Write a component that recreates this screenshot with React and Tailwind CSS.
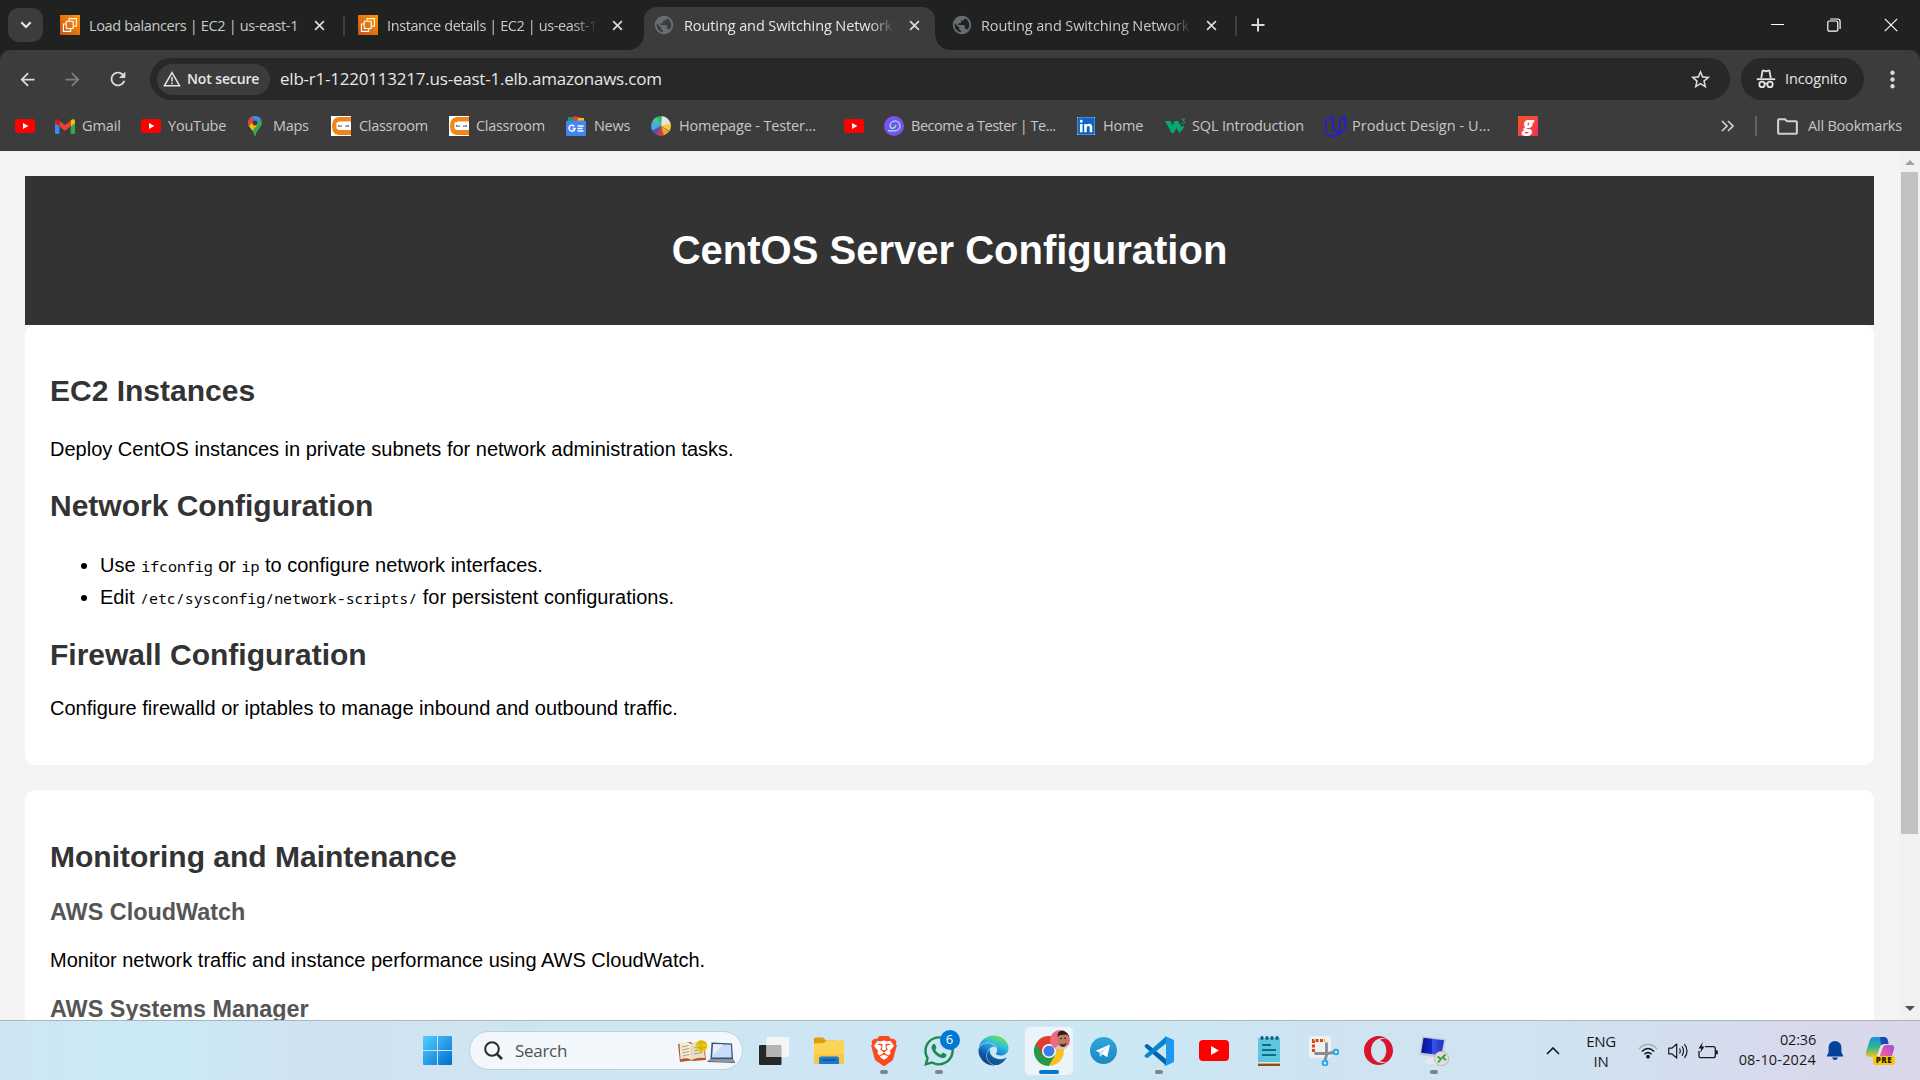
import { SiBrave, SiOpera, SiUdacity } from "react-icons/si";
import { FaWhatsapp, FaEdge, FaLinkedin } from "react-icons/fa";
import {
  MdArrowBack,
  MdArrowForward,
  MdRefresh,
  MdStarOutline,
  MdPublic,
  MdMoreVert,
  MdOutlineFolder,
} from "react-icons/md";

/* ---------- tab strip ---------- */

function Ec2Icon() {
  return (
    <svg viewBox="0 0 20 20" className="size-5 shrink-0">
      <defs>
        <linearGradient id="ec2" x1="0" y1="1" x2="1" y2="0">
          <stop offset="0" stopColor="#c8511b" />
          <stop offset="1" stopColor="#ff9900" />
        </linearGradient>
      </defs>
      <rect width="20" height="20" fill="url(#ec2)" />
      <g fill="none" stroke="#fff" strokeWidth="1.1">
        <rect x="6.2" y="6.2" width="7" height="7.3" rx=".6" />
        <path d="M9 6V3.6h7.4v7.6h-3M6 9H3.4v7.4h7.3v-2.7" />
      </g>
    </svg>
  );
}

function CloseX({ className }) {
  return (
    <svg viewBox="0 0 12 12" className={className} fill="none" stroke="currentColor" strokeWidth="1.9">
      <path d="M1.2 1.2l9.6 9.6M10.8 1.2L1.2 10.8" />
    </svg>
  );
}

function Tab({ icon, title, className, textClass, fade }) {
  return (
    <div className={`flex items-center ${className}`}>
      {icon}
      <span
        className={`mt-[2px] w-[211px] overflow-hidden whitespace-nowrap text-[14.5px] ${textClass} ${
          fade ? "[mask-image:linear-gradient(to_right,#000_88%,transparent)]" : ""
        }`}
      >
        {title}
      </span>
      <CloseX className="ml-[14px] size-[11px] shrink-0 text-[#d8d8d8]" />
    </div>
  );
}

function TabStrip() {
  return (
    <div className="flex h-[50px] bg-[#202221]">
      <div className="ml-2 mt-2 flex h-[34px] w-[35px] items-center justify-center rounded-[11px] bg-[#3c3c3c]">
        <svg viewBox="0 0 12 8" className="h-2 w-3" fill="none" stroke="#e6e6e6" strokeWidth="2.2">
          <path d="M1.3 1.3L6 6l4.7-4.7" />
        </svg>
      </div>
      <Tab
        className="ml-[17px] w-[283px]"
        icon={<Ec2Icon />}
        title="Load balancers | EC2 | us-east-1"
        textClass="ml-[9px] text-[#c9c9c9] tracking-[-0.36px]"
      />
      <div className="mt-[16px] h-5 w-0.5 rounded bg-[#3f4140]" />
      <Tab
        className="ml-[13px] w-[271px]"
        icon={<Ec2Icon />}
        title="Instance details | EC2 | us-east-1"
        textClass="ml-[9px] text-[#c9c9c9] tracking-[-0.4px]"
        fade
      />
      <div className="flex self-stretch">
        <div className="mt-auto size-[15px] bg-[radial-gradient(circle_at_0_0,transparent_14.5px,#3c3c3c_15px)]" />
        <Tab
          className="mt-[7px] w-[291px] rounded-t-[13px] bg-[#3c3c3c] pb-[7px] pl-[9px]"
          icon={<MdPublic className="size-[22px] shrink-0 text-[#696d73]" />}
          title="Routing and Switching Network"
          textClass="ml-[9px] text-[#e6e6e6] tracking-[-0.1px]"
          fade
        />
        <div className="mt-auto size-[15px] bg-[radial-gradient(circle_at_100%_0,transparent_14.5px,#3c3c3c_15px)]" />
      </div>
      <Tab
        className="ml-[1px] w-[284px]"
        icon={<MdPublic className="size-[22px] shrink-0 text-[#696d73]" />}
        title="Routing and Switching Network"
        textClass="ml-[8px] text-[#c9c9c9] tracking-[-0.1px]"
        fade
      />
      <div className="mt-[16px] h-5 w-0.5 rounded bg-[#3f4140]" />
      <svg viewBox="0 0 14 14" className="ml-[14px] mt-[18px] size-[14px]" stroke="#d8d8d8" strokeWidth="2">
        <path d="M7 .5v13M.5 7h13" />
      </svg>
      <div className="ml-auto mr-[22px] mt-[17px] flex h-[15px] items-center text-white">
        <div className="h-[1.5px] w-[13px] bg-white" />
        <svg viewBox="0 0 14 14" className="ml-[43px] size-[14px]" fill="none" stroke="currentColor" strokeWidth="1.2">
          <rect x=".8" y="3" width="10" height="10.2" rx="1.5" />
          <path d="M3.2 1h7.3a2.6 2.6 0 0 1 2.6 2.6v7.4" />
        </svg>
        <svg viewBox="0 0 14 14" className="ml-[43px] size-[14px]" stroke="currentColor" strokeWidth="1.2">
          <path d="M.8.8l12.4 12.4M13.2.8L.8 13.2" />
        </svg>
      </div>
    </div>
  );
}

/* ---------- toolbar ---------- */

function IncognitoIcon() {
  return (
    <svg viewBox="0 0 20 20" className="size-[20px]" fill="none" stroke="#e3e3e3" strokeWidth="1.8">
      <path d="M5.2 9.2L6.6 1.6h1.2l2.2.8 2.2-.8h1.2l1.4 7.6" strokeLinejoin="round" />
      <path d="M.8 10.2h18.4" />
      <circle cx="6" cy="15.4" r="2.7" />
      <circle cx="14" cy="15.4" r="2.7" />
      <path d="M8.6 14.8q1.4-.8 2.8 0" />
    </svg>
  );
}

function Toolbar() {
  return (
    <div className="bg-[#202221]">
      <div className="flex h-[58px] rounded-t-[11px] bg-[#3c3c3c] pt-2">
        <div className="flex h-[42px] items-center text-[21px] text-[#dcdcdc]">
          <MdArrowBack className="ml-[17px]" />
          <MdArrowForward className="ml-[24px] text-[#7f7f7f]" />
          <MdRefresh className="ml-[24px] text-[22px]" />
        </div>
        <div className="ml-[21px] flex h-[42px] w-[1580px] items-center rounded-full bg-[#282828] pl-[7px]">
          <div className="flex h-[31px] w-[113px] items-center rounded-full bg-[#3c3c3c] pl-[6px]">
            <svg viewBox="0 0 18 16" className="h-4 w-[18px]" fill="none" stroke="#e3e3e3" strokeWidth="1.5">
              <path d="M9 1.6L16.6 14.8H1.4z" />
              <path d="M9 6v4.4M9 11.6v1.6" />
            </svg>
            <span className="mb-[2px] ml-[6px] whitespace-nowrap text-[14px] font-semibold tracking-[-0.12px] text-[#e6e6e6]">
              Not secure
            </span>
          </div>
          <span className="ml-[10px] text-[17px] tracking-[-0.22px] text-[#e6e6e6]">
            elb-r1-1220113217.us-east-1.elb.amazonaws.com
          </span>
          <MdStarOutline className="ml-auto mr-[18px] size-[23px] text-[#dcdcdc]" />
        </div>
        <div className="ml-[11px] flex h-[42px] w-[123px] items-center rounded-full bg-[#282828] pl-[15px]">
          <IncognitoIcon />
          <span className="ml-[9px] text-[14.5px] tracking-[-0.1px] text-[#e6e6e6]">Incognito</span>
        </div>
        <div className="ml-[15px] flex h-[42px] items-center">
          <MdMoreVert className="size-[27px] text-[#dcdcdc]" />
        </div>
      </div>
    </div>
  );
}

/* ---------- bookmarks ---------- */

function YouTube({ className }) {
  return (
    <svg viewBox="0 0 30 21" className={className}>
      <rect width="30" height="21" rx="4" fill="#f00" />
      <path d="M12 6l8 4.5-8 4.5z" fill="#fff" />
    </svg>
  );
}

function Gmail() {
  return (
    <svg viewBox="0 0 20 15" className="h-[15px] w-5">
      <path d="M0 2.2V14a1 1 0 0 0 1 1h3.4V6z" fill="#4285f4" />
      <path d="M20 2.2V14a1 1 0 0 1-1 1h-3.4V6z" fill="#34a853" />
      <path d="M15.6 1.8V7.6L20 4.2V2a2 2 0 0 0-3.2-1.4z" fill="#fbbc04" />
      <path d="M4.4 1.8L10 6l5.6-4.2V7.6L10 11.8 4.4 7.6z" fill="#ea4335" />
      <path d="M0 2v2.2l4.4 3.4V1.8L3.2.6A2 2 0 0 0 0 2z" fill="#c5221f" />
    </svg>
  );
}

function Maps() {
  return (
    <svg viewBox="0 0 14 20" className="h-5 w-[14px]">
      <defs>
        <clipPath id="pin">
          <path d="M7 0a7 7 0 0 1 7 7c0 4-5 6-6.2 12.2-.2 1-1.400 1-1.600 0C5 13 0 11 0 7a7 7 0 0 1 7-7z" />
        </clipPath>
      </defs>
      <g clipPath="url(#pin)">
        <rect width="14" height="20" fill="#34a853" />
        <path d="M-1 11.5L9 0H-1z" fill="#1a73e8" />
        <path d="M-1 0h4l4 5-8 6z" fill="#ea4335" />
        <path d="M2.500 0H14v4L8 6z" fill="#4285f4" />
        <path d="M0 11L6 5l4 3-6 7z" fill="#fbbc04" />
      </g>
      <circle cx="7" cy="7" r="2.5" fill="#3c3c3c" />
    </svg>
  );
}

function Classroom() {
  return (
    <svg viewBox="0 0 20 20" className="size-5">
      <rect width="20" height="20" fill="#fff" />
      <path d="M20 1H8Q1 1.500 1 10t7 9h12v-5H9q-2.500 0-2.800-2.500V8Q6.500 5.500 9 5.500h11z" fill="#f0861a" />
      <rect x="5.500" y="6" width="14.500" height="7.500" rx="1.500" fill="#fff" />
      <path d="M7 9q2 1.400 4 .4v1.200H7zM14 9.400q2 1 4-.4v1.600h-4z" fill="#333" />
    </svg>
  );
}

function News() {
  return (
    <svg viewBox="0 0 20 20" className="size-5">
      <path d="M2 1h8v8H2z" fill="#0f9d58" />
      <path d="M8 0l9 2-2 7H6z" fill="#ea4335" />
      <path d="M12.500 2H18v6h-8z" fill="#fbbc04" />
      <rect y="4.5" width="20" height="15.5" rx="1.5" fill="#4285f4" />
      <path d="M8.4 10.3a3 3 0 1 0 .6 2.300H6.5M11.500 10h6M11.500 12.500h5M11.500 15h6" stroke="#fff" strokeWidth="1.5" fill="none" />
    </svg>
  );
}

function TesterWheel() {
  return (
    <svg viewBox="0 0 20 20" className="size-5">
      <defs>
        <clipPath id="wheel">
          <circle cx="10" cy="10" r="10" />
        </clipPath>
      </defs>
      <g clipPath="url(#wheel)">
        <path d="M10 10L0 0h12z" fill="#2fb58a" />
        <path d="M10 10L11 0h9v9z" fill="#e3e6e4" />
        <path d="M10 10l10-3v9z" fill="#f5c93a" />
        <path d="M10 10l9 6-7 4z" fill="#f0a03c" />
        <path d="M10 10l3 10H4z" fill="#c0483a" />
        <path d="M10 10L5 20H0v-6z" fill="#5a4fb0" />
        <path d="M10 10L0 15V2z" fill="#4ba7dd" />
        <path d="M10 10L1 4l4-4z" fill="#45c98e" />
      </g>
    </svg>
  );
}

function TesterBadge() {
  return (
    <svg viewBox="0 0 20 20" className="size-5">
      <circle cx="10" cy="10" r="10" fill="#7a52f4" />
      <path d="M4 14.800h7.500a4.900 4.900 0 1 0-5.400-5q.4 3 3 2.400 2-.6 3-3.200" fill="none" stroke="#8ce0d8" strokeWidth="1.5" />
    </svg>
  );
}

function W3() {
  return (
    <svg viewBox="0 0 21 16" className="h-4 w-[21px]">
      <path d="M0 3h5.500l2 4.500L9.500 3H13l3.500 6 1.500-1.500 1 2L14.500 15 11.300 10 8.800 15H6.500z" fill="#04aa6d" />
      <path d="M16.500 1h3l-1.500 2q2 .2 1.500 2-.8 1.600-3 .6" fill="none" stroke="#04aa6d" strokeWidth="1" />
    </svg>
  );
}

function GTile() {
  return (
    <div className="flex size-5 items-center justify-center bg-gradient-to-br from-[#f4581c] to-[#ee2a5c] pb-[4px] font-['Open_Sans'] text-[19px] font-extrabold italic leading-none text-white">
      g
    </div>
  );
}

const bookmarks = [
  { w: "w-[40px]", icon: <YouTube className="h-[14px] w-5" /> },
  { w: "w-[86px]", icon: <Gmail />, label: "Gmail", text: "ml-[7px] tracking-[-0.1px]" },
  { w: "w-[107px]", icon: <YouTube className="h-[14px] w-5" />, label: "YouTube", text: "ml-[7px] tracking-[-0.2px]" },
  { w: "w-[83px]", icon: <Maps />, label: "Maps", text: "ml-[11px]" },
  { w: "w-[118px]", icon: <Classroom />, label: "Classroom" },
  { w: "w-[117px]", icon: <Classroom />, label: "Classroom", text: "ml-[7px]" },
  { w: "w-[85px]", icon: <News />, label: "News" },
  { w: "w-[193px]", icon: <TesterWheel />, label: "Homepage - Tester...", text: "ml-[8px] tracking-[-0.15px]" },
  { w: "w-[40px]", icon: <YouTube className="h-[14px] w-5" /> },
  { w: "w-[193px]", icon: <TesterBadge />, label: "Become a Tester | Te...", text: "ml-[7px] tracking-[-0.48px]" },
  {
    w: "w-[88px]",
    icon: (
      <span className="flex size-[18px] items-center justify-center bg-white">
        <FaLinkedin className="size-[20px] shrink-0 text-[#0a66c2]" />
      </span>
    ),
    label: "Home",
    text: "ml-[8px] tracking-[-0.2px]",
  },
  { w: "w-[160px]", icon: <W3 />, label: "SQL Introduction", text: "ml-[6px] tracking-[-0.15px]" },
  {
    w: "w-[193px]",
    icon: <SiUdacity className="size-[21px] text-[#2015ff]" />,
    label: "Product Design - U...",
    text: "ml-[6px] tracking-[0.05px]",
  },
  { w: "w-[40px]", icon: <GTile /> },
];

function Bookmarks() {
  return (
    <div className="flex h-[43px] bg-[#3c3c3c] pb-[7px] pl-[15px] text-[14.5px] tracking-[-0.3px] text-[#c7c7c7]">
      {bookmarks.map((b, i) => (
        <div key={i} className={`flex shrink-0 items-center whitespace-nowrap ${b.w}`}>
          <span className="shrink-0">{b.icon}</span>
          {b.label && <span className={b.text || "ml-[8px]"}>{b.label}</span>}
        </div>
      ))}
      <div className="ml-auto flex items-center pr-[18px]">
        <svg viewBox="0 0 13 12" className="h-3 w-[13px]" fill="none" stroke="#d0d0d0" strokeWidth="1.7">
          <path d="M1 1l5 5-5 5M7 1l5 5-5 5" />
        </svg>
        <div className="ml-[21px] h-5 w-0.5 rounded bg-[#636363]" />
        <MdOutlineFolder className="ml-[18px] size-[25px] text-[#d0d0d0]" />
        <span className="ml-[8px] tracking-[-0.2px]">All Bookmarks</span>
      </div>
    </div>
  );
}

/* ---------- web page ---------- */

function H2({ className, children }) {
  return <h2 className={`text-[30px] font-bold leading-[48px] text-[#333] ${className || ""}`}>{children}</h2>;
}

function H3({ className, children }) {
  return <h3 className={`text-[23.4px] font-bold leading-[37px] text-[#555] ${className || ""}`}>{children}</h3>;
}

function Code({ children }) {
  return <code className="font-['Noto_Sans_Mono','DejaVu_Sans_Mono',monospace] text-[15px] tracking-[-0.06px]">{children}</code>;
}

function Page() {
  return (
    <div className="flex h-[869px] overflow-hidden bg-[#f4f4f4]">
      <main className="ml-[25px] mr-[25px] mt-[25px] flex-1 font-['Liberation_Sans',Arial,sans-serif] text-[20px] leading-[32px] text-black">
        <header className="h-[149px] bg-[#333] pt-[42px] text-center">
          <h1 className="text-[40px] font-bold leading-[64px] text-white">CentOS Server Configuration</h1>
        </header>
        <section className="h-[440px] rounded-[10px] bg-white px-[25px] pt-[42px]">
          <H2>EC2 Instances</H2>
          <p className="mt-[18px]">Deploy CentOS instances in private subnets for network administration tasks.</p>
          <H2 className="mt-[17px]">Network Configuration</H2>
          <ul className="mt-[19px] list-disc pl-[50px]">
            <li className="h-8">
              Use <Code>ifconfig</Code> or <Code>ip</Code> to configure network interfaces.
            </li>
            <li className="h-8">
              Edit <Code>/etc/sysconfig/network-scripts/</Code> for persistent configurations.
            </li>
          </ul>
          <H2 className="mt-[18px]">Firewall Configuration</H2>
          <p className="mt-[13px]">Configure firewalld or iptables to manage inbound and outbound traffic.</p>
        </section>
        <section className="mt-[25px] h-[440px] rounded-[10px] bg-white px-[25px] pt-[43px]">
          <H2>Monitoring and Maintenance</H2>
          <H3 className="mt-[13px]">AWS CloudWatch</H3>
          <p className="mt-[13px]">Monitor network traffic and instance performance using AWS CloudWatch.</p>
          <H3 className="mt-[15px]">AWS Systems Manager</H3>
        </section>
      </main>
      <div className="flex w-[21px] flex-col items-center bg-[#f1f1f1]">
        <svg viewBox="0 0 10 5" className="mt-[9px] h-[5px] w-[10px] shrink-0">
          <path d="M5 0l5 5H0z" fill="#a3a3a3" />
        </svg>
        <div className="mt-[7px] h-[662px] w-[17px] shrink-0 bg-[#c1c1c1]" />
        <svg viewBox="0 0 10 5" className="mb-[9px] mt-auto h-[5px] w-[10px] shrink-0">
          <path d="M5 5l5-5H0z" fill="#505050" />
        </svg>
      </div>
    </div>
  );
}

/* ---------- taskbar ---------- */

function StartIcon() {
  return (
    <svg viewBox="0 0 29 29" className="size-[29px]">
      <defs>
        <linearGradient id="win" x1="0" y1="0" x2="29" y2="29" gradientUnits="userSpaceOnUse">
          <stop offset="0" stopColor="#52d1ff" />
          <stop offset="1" stopColor="#006ccf" />
        </linearGradient>
      </defs>
      <path
        d="M1 0h13v14H0V1a1 1 0 0 1 1-1zM15 0h13a1 1 0 0 1 1 1v13H15zM0 15h14v14H1a1 1 0 0 1-1-1zM15 15h14v13a1 1 0 0 1-1 1H15z"
        fill="url(#win)"
      />
    </svg>
  );
}

function SearchArt() {
  return (
    <svg viewBox="0 0 58 24" className="h-6 w-[58px]">
      <path d="M1 5l12-2 2 1 12 0 2 17-13 1-2-.5L3 23z" fill="#b5552e" />
      <path d="M2.5 4.500q7-3 11.500.5l1 16q-5-3-11.500-.5z" fill="#f4ead2" />
      <path d="M14 5q6-4 12-1l2 15q-8-1-13 2z" fill="#eadfc2" />
      <path d="M4.500 8l7-1.500M5 11l7-1.500M5 14l7-1.500M5.500 17l7-1.500M16.500 9l5-1M17 12l7-1.500M17 15l8-1.500" stroke="#9c8d75" strokeWidth=".8" />
      <circle cx="24.500" cy="7" r="6" fill="#ecc81c" />
      <path d="M20.500 4.500q4-3 8 0M20 8q4 2.500 9 0M24 2v10" stroke="#cfa70b" strokeWidth="1" fill="none" />
      <path d="M34.500 3.500l20.500 1 1 15.500H33.500z" fill="#3f5069" />
      <path d="M36 5l18 .8.6 12.700H35z" fill="#c7dcf8" />
      <path d="M36 5l10 .5L36 16z" fill="#e5effc" />
      <path d="M33 20h23.500l1.500 3-27.500-1z" fill="#8992ab" />
      <path d="M30.500 22l27.500 1v1l-27.500-1z" fill="#596077" />
    </svg>
  );
}

function TaskView() {
  return (
    <svg viewBox="0 0 30 28" className="h-7 w-[30px]">
      <rect y="8" width="22.5" height="20" rx="1" fill="#262626" />
      <rect x="7.5" width="22.5" height="20" rx="1" fill="#f5f5f5" />
      <rect x="7.5" y="8" width="15" height="12" fill="#b4b4b4" />
    </svg>
  );
}

function Explorer() {
  return (
    <svg viewBox="0 0 30 27" className="h-[27px] w-[30px]">
      <path d="M0 2q0-1.500 1.500-1.500H9L12 3.500h8V10H0z" fill="#dd9e0e" />
      <path d="M0 6.500L10 6l2.500-2.500H29q1 0 1 1V27H0z" fill="#fcd354" />
      <path d="M0 17h30v10H0z" fill="#f6c338" opacity=".6" />
      <path d="M5 27v-5.500Q5 19.500 7 19.500h16q2 0 2 2V27z" fill="#1a78cf" />
      <path d="M8.500 23h13" stroke="#0b4b94" strokeWidth="1.2" />
    </svg>
  );
}

function Edge() {
  return (
    <>
      <svg className="absolute size-0">
        <defs>
          <linearGradient id="edge" gradientUnits="userSpaceOnUse" x1="470" y1="110" x2="300" y2="500">
            <stop offset="0" stopColor="#5fdc6a" />
            <stop offset=".22" stopColor="#35c1d8" />
            <stop offset=".5" stopColor="#1b8fd8" />
            <stop offset=".75" stopColor="#0f5ca8" />
            <stop offset="1" stopColor="#114a8b" />
          </linearGradient>
        </defs>
      </svg>
      <FaEdge className="size-[31px] fill-[url(#edge)]" />
    </>
  );
}

function Chrome() {
  return (
    <div className="relative">
      <svg viewBox="0 0 30 30" className="size-[30px]">
        <path d="M15 15L2 7.500A15 15 0 0 0 15 30l6.500-11z" fill="#279847" />
        <path d="M15 8h13.200A15 15 0 0 1 15 30l6.300-11z" fill="#fcc21b" />
        <path d="M2 7.500L8.700 18.500 15 8h13.200L28 7.500A15 15 0 0 0 2 7.500z" fill="#e33b2e" />
        <circle cx="15" cy="15" r="7" fill="#fff" />
        <circle cx="15" cy="15" r="5.500" fill="#3a7cec" />
      </svg>
      <svg viewBox="0 0 20 20" className="absolute -right-[6px] -top-[6px] size-5">
        <defs>
          <clipPath id="face">
            <circle cx="10" cy="10" r="10" />
          </clipPath>
        </defs>
        <g clipPath="url(#face)">
          <rect width="20" height="20" fill="#ee6a83" />
          <path d="M4 20q2-5 8-5t8 2v3z" fill="#d9c4b4" />
          <ellipse cx="13" cy="9.500" rx="5.500" ry="7.500" fill="#bd7a5c" />
          <path d="M7.500 7Q7 .5 13 .5T19 7l-2-2.500-7 .5z" fill="#2a1d1c" />
          <path d="M9.500 13.500q3.500 1.500 7-.5-.5 4-3.500 4t-3.500-3.500z" fill="#4e3025" />
          <path d="M10 8.500h2M14 8.300h2" stroke="#3a221b" strokeWidth="1" />
        </g>
      </svg>
    </div>
  );
}

function Telegram() {
  return (
    <svg viewBox="0 0 27 27" className="size-[27px]">
      <defs>
        <linearGradient id="tg" x1="0" y1="0" x2="0" y2="1">
          <stop offset="0" stopColor="#2fa7de" />
          <stop offset="1" stopColor="#1c87bf" />
        </linearGradient>
      </defs>
      <circle cx="13.500" cy="13.500" r="13.500" fill="url(#tg)" />
      <path d="M5.500 13.800L20 7.500l-2.800 12.800-4.700-3-2.500 2.500-.5-4.300z" fill="#fff" />
      <path d="M9.500 15.500l7.500-5.500-5.500 6.500-1.500 3.300z" fill="#b9d9ea" />
    </svg>
  );
}

function VsCode() {
  return (
    <svg viewBox="0 0 30 30" className="size-[30px]">
      <path d="M1.500 8.500L3.500 8l18.500 15V29.500L.8 11q-.8-1 .7-2.500z" fill="#0065a9" />
      <path d="M1.500 21.500L3.500 22 22 7.500V.5L.8 19q-.8 1 .7 2.500z" fill="#0a84cc" />
      <path d="M21.500.3L29 3.600q1 .5 1 1.500v19.800q0 1-1 1.500l-7.500 3.500q-1 .2-1.500-.5 2 0 2-1.500V2Q22 .5 20 .6q.6-.6 1.500-.3z" fill="#2196f0" />
    </svg>
  );
}

function Notepad() {
  return (
    <svg viewBox="0 0 22 30" className="h-[30px] w-[22px]">
      <rect y="2" width="22" height="25" rx="1" fill="#5cc6de" />
      <g fill="#0b647f">
        <ellipse cx="4" cy="2" rx="1.7" ry="2" />
        <ellipse cx="9" cy="2" rx="1.7" ry="2" />
        <ellipse cx="14" cy="2" rx="1.7" ry="2" />
        <ellipse cx="19" cy="2" rx="1.7" ry="2" />
      </g>
      <path d="M4 9h9M4 14h14M4 19h14" stroke="#0c6d8c" strokeWidth="2" />
      <rect y="27" width="22" height="3" fill="#974a0c" />
      <rect y="26.3" width="22" height="1.2" fill="#fff" />
    </svg>
  );
}

function Snip() {
  return (
    <svg viewBox="0 0 30 30" className="size-[30px]">
      <rect width="22" height="22" rx="2" fill="#f1efef" />
      <path d="M4.500 16V4.500H16" fill="none" stroke="#d34715" strokeWidth="3" strokeDasharray="3 1.5" />
      <path d="M17.500 6.500v13L16 24M5.500 17.500h13L24 16.500" fill="none" stroke="#868b92" strokeWidth="2.8" />
      <circle cx="16" cy="27" r="2.4" fill="none" stroke="#24a3e6" strokeWidth="1.8" />
      <circle cx="27" cy="16" r="2.4" fill="none" stroke="#24a3e6" strokeWidth="1.8" />
    </svg>
  );
}

function Remote() {
  return (
    <svg viewBox="0 0 30 30" className="size-[30px]">
      <defs>
        <linearGradient id="screen" x1="0" y1="0" x2="1" y2="0">
          <stop offset="0" stopColor="#0a1490" />
          <stop offset=".45" stopColor="#1226c8" />
          <stop offset=".5" stopColor="#3b55e6" />
          <stop offset="1" stopColor="#1a2fc4" />
        </linearGradient>
      </defs>
      <path d="M7 23l8-3 5 5-3 3H8q-4-2-1-5z" fill="#e6e8ea" />
      <path d="M3 .5L27 3l-3.500 19L.5 19z" fill="#c3c9d2" />
      <path d="M4.500 1.800L25 4.200l-2.800 15-20-2.500z" fill="url(#screen)" />
      <circle cx="22.500" cy="22.500" r="7.300" fill="#dcdcdc" stroke="#a4a4a4" strokeWidth=".6" />
      <path d="M18.500 20.500l3.500 2.500-3 3.500M26.500 18.500l-3 3 3.500 2.500" fill="none" stroke="#36a02e" strokeWidth="1.8" />
    </svg>
  );
}

function Copilot() {
  return (
    <div className="relative">
      <svg viewBox="0 0 30 28" className="h-7 w-[30px]">
        <defs>
          <linearGradient id="cpA" x1="0" y1="0" x2="0" y2="1">
            <stop offset="0" stopColor="#1b8fe8" />
            <stop offset=".5" stopColor="#2eb58c" />
            <stop offset="1" stopColor="#f1c51f" />
          </linearGradient>
          <linearGradient id="cpB" x1="1" y1="0" x2="0" y2="1">
            <stop offset="0" stopColor="#a24bea" />
            <stop offset=".6" stopColor="#f0618e" />
            <stop offset="1" stopColor="#fb8b53" />
          </linearGradient>
        </defs>
        <path d="M16 8h9q4 0 3 4l-2.500 9q-1 4-5 4H9q3 0 4-4z" fill="url(#cpB)" />
        <path d="M8 0h10q3 0 4 4l.5 3H18q-3 0-4 3l-2.500 7q-.7 3-4 3H4q-5 0-4-5L3.500 4Q4.500 0 8 0z" fill="url(#cpA)" />
        <path d="M14 0h4q3 0 4 4l.5 3H18l-3 1z" fill="#1d46b8" />
        <path d="M18 7.500q-3 0-4 3l-3 9.500h2.500l3-9q.8-3 3.500-3.500z" fill="#e4e4f4" />
      </svg>
      <span className="absolute left-[7px] top-[19px] flex h-[9px] w-[22px] items-center justify-center rounded-[2px] bg-[#fdc40c] text-[8px] font-extrabold tracking-[0.5px] text-[#1c1c1c]">
        PRE
      </span>
    </div>
  );
}

function AppCell({ children, indicator, tile }) {
  return (
    <div className="relative flex h-full w-[55px] shrink-0 items-center justify-center">
      <div
        className={`flex size-12 items-center justify-center rounded-[5px] ${
          tile ? "bg-[#eaf4fa] ring-1 ring-[#d8e6ee]" : ""
        }`}
      >
        {children}
      </div>
      {indicator && <div className={`absolute bottom-[6px] h-1 rounded-full ${indicator}`} />}
    </div>
  );
}

function Taskbar() {
  return (
    <div className="flex h-[60px] border-t border-[#a9b4bf] bg-[linear-gradient(to_right,#cfe6f3_0%,#c9ebf5_8%,#d1e2f1_16%,#cfe5f2_30%,#cde6f3_50%,#cbe8f4_57%,#cfe3f1_70%,#cfe3f1_80%,#d3deef_88%,#d9d9ec_94%,#d8d8ea_100%)]">
      <div className="ml-[423px] flex items-center">
        <StartIcon />
      </div>
      <div className="ml-[17px] mt-[10px] flex h-[39px] w-[274px] items-center rounded-full border border-[#b9d1df] bg-[#f1f7fb] pl-[14px]">
        <svg viewBox="0 0 19 19" className="size-[19px]" fill="none" stroke="#2a2a2a" strokeWidth="2">
          <circle cx="8" cy="8" r="6.8" />
          <path d="M12.800 12.800l5.200 5.200" strokeWidth="2.6" />
        </svg>
        <span className="ml-[12px] text-[17px] tracking-[-0.3px] text-[#4d5156]">Search</span>
        <span className="ml-auto mr-[7px]">
          <SearchArt />
        </span>
      </div>
      <div className="ml-[3px] flex">
        <AppCell><TaskView /></AppCell>
        <AppCell><Explorer /></AppCell>
        <AppCell indicator="w-2 bg-[#7c858b]">
          <span className="flex items-center justify-center bg-[radial-gradient(circle,#fff_10px,transparent_11px)]">
            <SiBrave className="size-[30px] text-[#fa4a1c]" />
          </span>
        </AppCell>
        <AppCell indicator="w-2 bg-[#7c858b]">
          <div className="relative">
            <FaWhatsapp className="size-[34px] text-[#1c8a52]" />
            <span className="absolute -right-[4px] -top-[4px] flex size-5 items-center justify-center rounded-full bg-[#0078d4] text-[13px] text-white">
              6
            </span>
          </div>
        </AppCell>
        <AppCell><Edge /></AppCell>
        <AppCell tile indicator="w-5 bg-[#0078d4]"><Chrome /></AppCell>
        <AppCell><Telegram /></AppCell>
        <AppCell indicator="w-2 bg-[#7c858b]"><VsCode /></AppCell>
        <AppCell><YouTube className="h-[21px] w-[30px]" /></AppCell>
        <AppCell><Notepad /></AppCell>
        <AppCell><Snip /></AppCell>
        <AppCell>
          <SiOpera className="size-[29px] text-[#d9142b]" />
        </AppCell>
        <AppCell indicator="w-2 bg-[#7c858b]"><Remote /></AppCell>
      </div>
      <div className="ml-auto flex items-center text-[#1a1a1a]">
        <svg viewBox="0 0 14 8" className="h-2 w-[14px]" fill="none" stroke="currentColor" strokeWidth="1.7">
          <path d="M1 7l6-6 6 6" />
        </svg>
        <div className="ml-[25px] w-[32px] text-center text-[15px] leading-[20px] tracking-[-0.3px]">
          <div>ENG</div>
          <div>IN</div>
        </div>
        <svg viewBox="0 0 20 16" className="ml-[21px] h-4 w-5" fill="none" stroke="currentColor" strokeWidth="1.5">
          <path d="M.8 6.200Q10-3.500 19.200 6.200" stroke="#9fb0bb" />
          <path d="M3.800 8.500q6.200-6 12.400 0M6.400 11.200q3.600-3.200 7.200 0" />
          <circle cx="10" cy="13.700" r="1.9" fill="currentColor" stroke="none" />
        </svg>
        <svg viewBox="0 0 20 18" className="ml-[10px] h-[18px] w-5" fill="none" stroke="currentColor" strokeWidth="1.2">
          <path d="M.7 6.200v5.600h3l5 4.200V2l-5 4.200z" strokeLinejoin="round" />
          <path d="M11.500 6.500q1.600 2.500 0 5M14 4.300q3 4.700 0 9.400M16.500 2.200q5 6.800 0 13.600" />
        </svg>
        <svg viewBox="0 0 20 18" className="ml-[10px] h-[18px] w-5" fill="none" stroke="currentColor" strokeWidth="1.3">
          <path d="M7 4.700h8.300q2 0 2 2v7q0 2-2 2H3q-2 0-2-2V9" />
          <path d="M18.800 8.300v4" strokeWidth="2" />
          <path d="M4.800 0L.5 6.500h2.700L2.200 11l4.300-6.500H3.800z" fill="currentColor" stroke="none" />
        </svg>
        <div className="ml-[20px] flex w-[78px] flex-col items-end whitespace-nowrap pb-px text-[14.5px] leading-[20px]">
          <div className="tracking-[-0.2px]">02:36</div>
          <div className="tracking-[0.17px]">08-10-2024</div>
        </div>
        <svg viewBox="0 0 16 19" className="ml-[11px] h-[19px] w-4" fill="#04419a">
          <path d="M8 0a6.400 6.400 0 0 1 6.400 6.400v4.800L16 14.500v1H0v-1l1.600-3.300V6.400A6.400 6.400 0 0 1 8 0zM5 16.500h6q-1 2.500-3 2.500t-3-2.500z" />
        </svg>
        <div className="ml-[23px] mr-[24px]">
          <Copilot />
        </div>
      </div>
    </div>
  );
}

export default function App() {
  return (
    <div className="h-[1080px] w-[1920px] overflow-hidden font-['Open_Sans','Noto_Sans',sans-serif]">
      <TabStrip />
      <Toolbar />
      <Bookmarks />
      <Page />
      <Taskbar />
    </div>
  );
}
